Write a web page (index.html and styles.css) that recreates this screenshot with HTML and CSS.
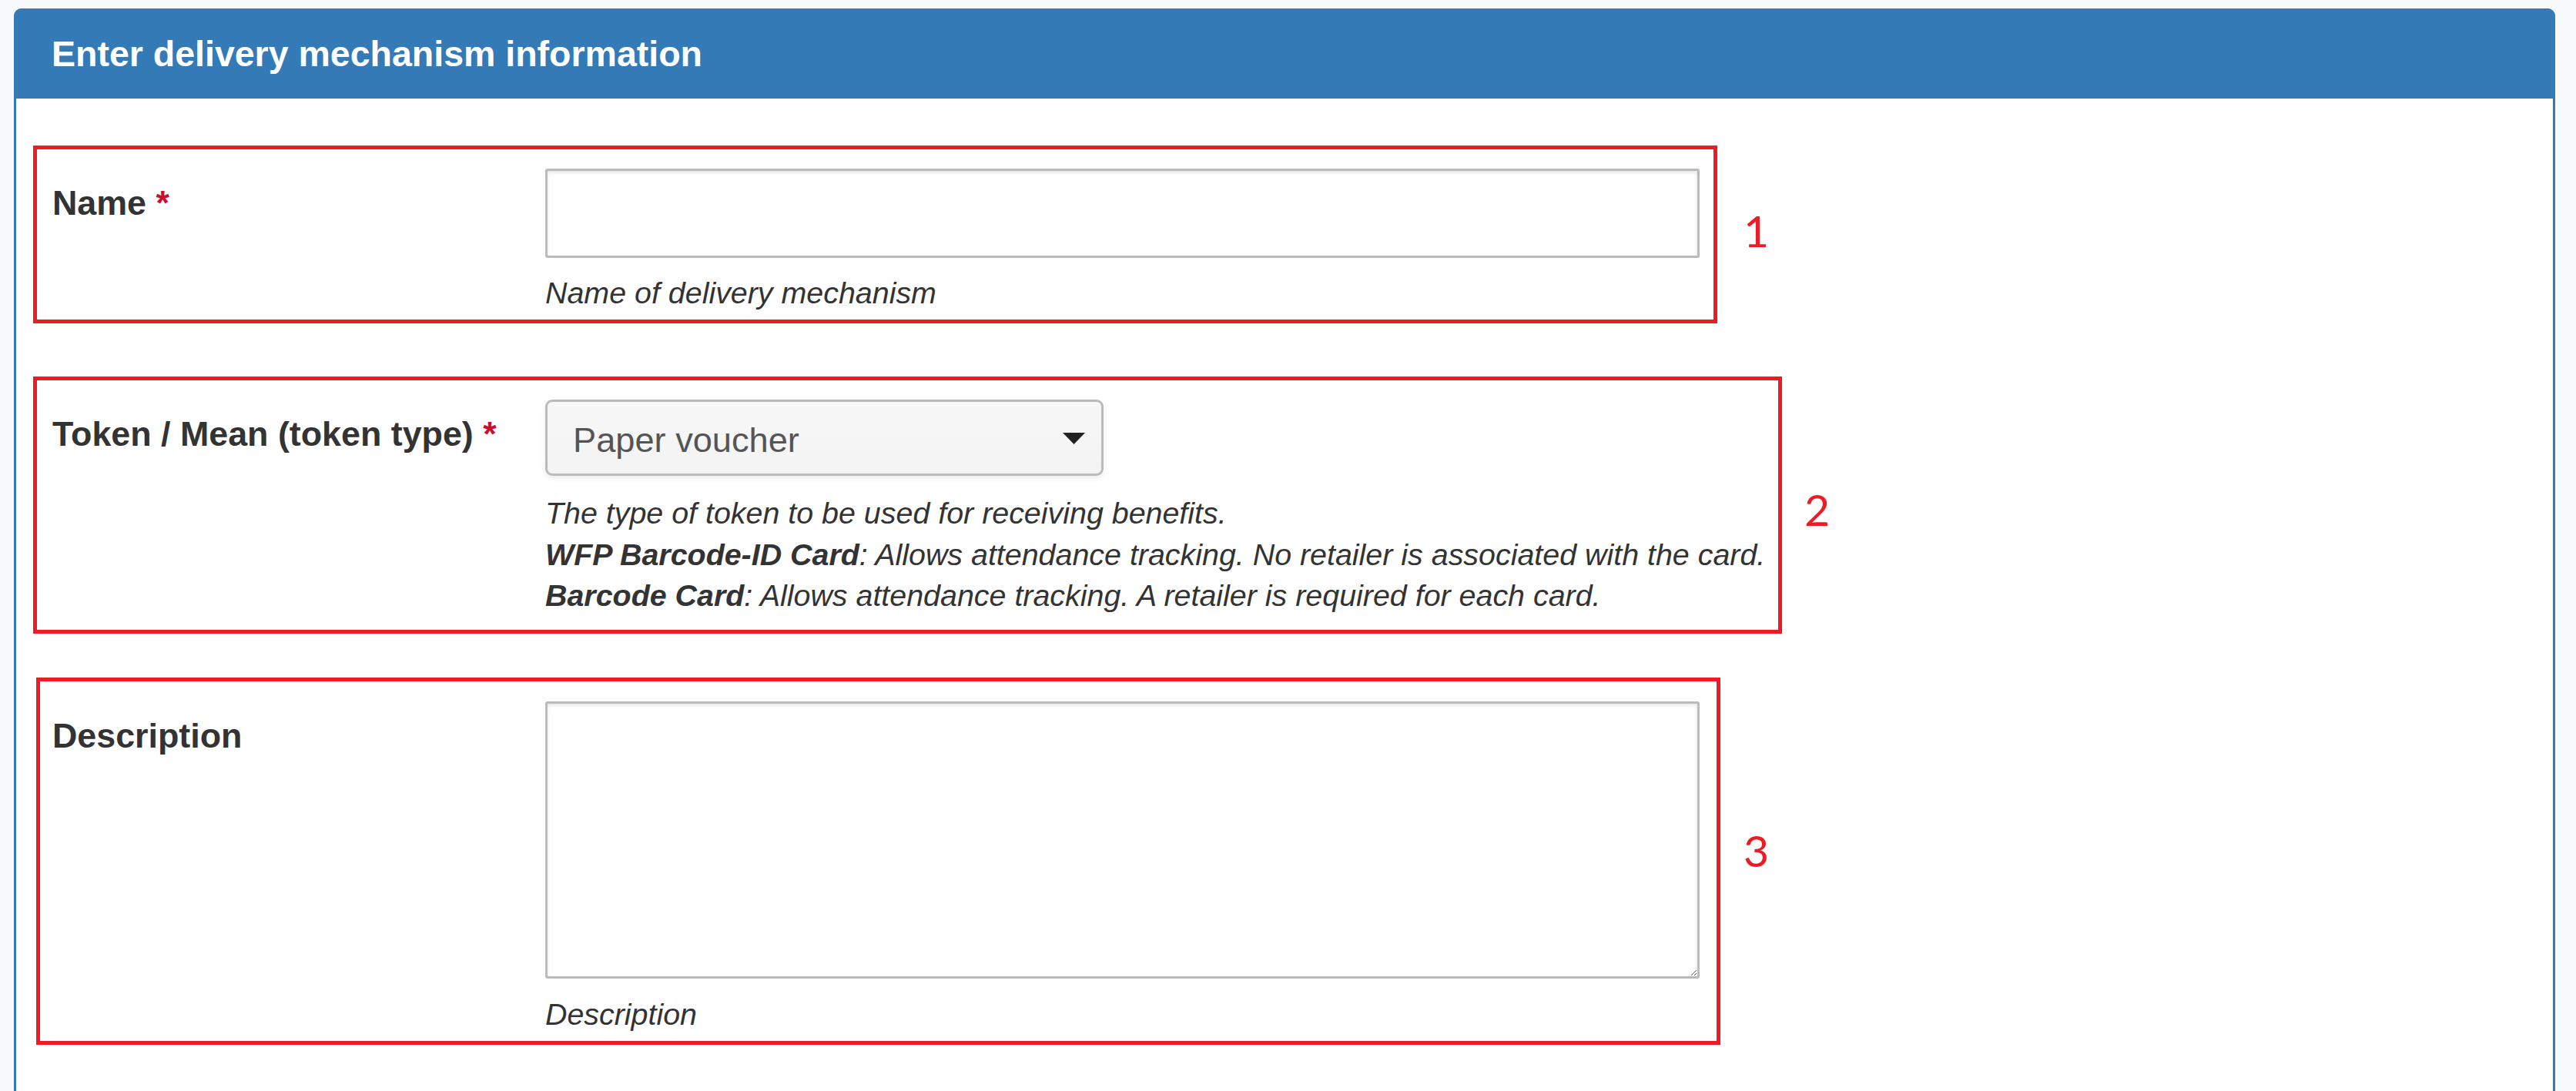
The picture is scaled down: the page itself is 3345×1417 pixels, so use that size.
FILE: index.html
```html
<!DOCTYPE html>
<html lang="en">
<head>
<meta charset="utf-8">
<title>Enter delivery mechanism information</title>
<link rel="stylesheet" href="styles.css">
</head>
<body>
<div class="panel">
  <div class="panel-heading">
    <h3 class="panel-title">Enter delivery mechanism information</h3>
  </div>
  <div class="panel-body">
    <div class="anno-row row-1">
      <div class="anno-box box-1">
        <label class="ctl-label" for="name">Name <span class="req">*</span></label>
        <div class="field">
          <input id="name" class="form-control" type="text">
          <p class="help help-1">Name of delivery mechanism</p>
        </div>
      </div>
      <span class="anno-num num-1">1</span>
    </div>

    <div class="anno-row row-2">
      <div class="anno-box box-2">
        <label class="ctl-label">Token / Mean (token type) <span class="req">*</span></label>
        <div class="field">
          <div class="select-box" role="combobox" aria-expanded="false">
            <span class="select-text">Paper voucher</span>
            <svg class="caret" width="29" height="15" viewBox="0 0 29 15"><path d="M0 0 H29 L14.5 15 Z" fill="#222"/></svg>
          </div>
          <p class="help help-2">The type of token to be used for receiving benefits.<br><b>WFP Barcode-ID Card</b>: Allows attendance tracking. No retailer is associated with the card.<br><b>Barcode Card</b>: Allows attendance tracking. A retailer is required for each card.</p>
        </div>
      </div>
      <span class="anno-num num-2">2</span>
    </div>

    <div class="anno-row row-3">
      <div class="anno-box box-3">
        <label class="ctl-label" for="desc">Description</label>
        <div class="field">
          <textarea id="desc" class="form-control textarea"></textarea>
          <p class="help help-3">Description</p>
        </div>
      </div>
      <span class="anno-num num-3">3</span>
    </div>
  </div>
</div>
</body>
</html>
```

FILE: styles.css
```css
* { box-sizing: border-box; }

html, body {
  margin: 0;
  padding: 0;
  background: #f8f9fb;
  font-family: "Liberation Sans", Arial, sans-serif;
  color: #333;
}

body {
  padding: 11px 0 0 18px;
}

.panel {
  width: 3300px;
  background: #fff;
  border: 3px solid #337ab7;
  border-bottom: none;
  border-radius: 10px 10px 0 0;
}

.panel-heading {
  background: #337ab7;
  margin: -3px -3px 0 -3px;
  padding: 33px 44px 32px 49px;
  border-radius: 10px 10px 0 0;
}

.panel-title {
  margin: 0;
  color: #fff;
  font-size: 46.5px;
  line-height: 52px;
  font-weight: bold;
}

.panel-body {
  padding: 0 0 120px 0;
}

.anno-row {
  display: flex;
  align-items: flex-start;
}

.row-1 { margin: 61px 0 0 22px; }
.row-2 { margin: 69px 0 0 22px; }
.row-3 { margin: 57px 0 0 26px; }

.anno-box {
  display: flex;
  align-items: flex-start;
  border: 5px solid #ed1c24;
}

.box-1 { width: 2187px; padding: 25px 18px 7.5px 20px; }
.box-2 { width: 2271px; padding: 25px 0 17.5px 20px; }
.box-3 { width: 2187px; padding: 26px 22px 7.5px 16px; }

.ctl-label {
  flex: 0 0 640px;
  margin-top: 14px;
  font-size: 44.8px;
  line-height: 60px;
  font-weight: bold;
  color: #333;
}

.req {
  color: #c8102e;
}

.field {
  flex: 1 1 auto;
  min-width: 0;
}

.form-control {
  display: block;
  width: 1499px;
  height: 116px;
  margin: 0;
  border: 3px solid #bbb;
  border-radius: 3px;
  background: #fff;
  box-shadow: inset 0 3px 4px rgba(0, 0, 0, 0.07), inset -2px 0 4px rgba(0, 0, 0, 0.04);
  font-family: "Liberation Sans", Arial, sans-serif;
  font-size: 44px;
  padding: 0 30px;
}

.textarea {
  height: 360px;
  resize: vertical;
  padding: 16px 30px;
}

.select-box {
  display: flex;
  align-items: center;
  width: 725px;
  height: 99px;
  padding: 6px 21px 0 33px;
  border: 3px solid #bbb;
  border-radius: 9px;
  background: linear-gradient(#f8f8f8, #f3f3f3);
  box-shadow: 0 3px 7px rgba(0, 0, 0, 0.08);
}

.select-text {
  font-size: 45.2px;
  line-height: 1;
  color: #555;
}

.caret {
  margin-left: auto;
  margin-top: -4px;
  flex: none;
}

.help {
  margin: 0;
  font-size: 39.4px;
  line-height: 53.5px;
  font-style: italic;
  color: #333;
  white-space: nowrap;
}

.help-1 { margin-top: 19px; }
.help-2 { margin-top: 22px; }
.help-3 { margin-top: 20px; }

.anno-num {
  font-family: Lato, "Open Sans", sans-serif;
  font-size: 57px;
  line-height: 1;
  color: #ed1c24;
}

.num-1 { margin: 82px 0 0 34px; }
.num-2 { margin: 144px 0 0 29px; }
.num-3 { margin: 196px 0 0 30px; }
```
